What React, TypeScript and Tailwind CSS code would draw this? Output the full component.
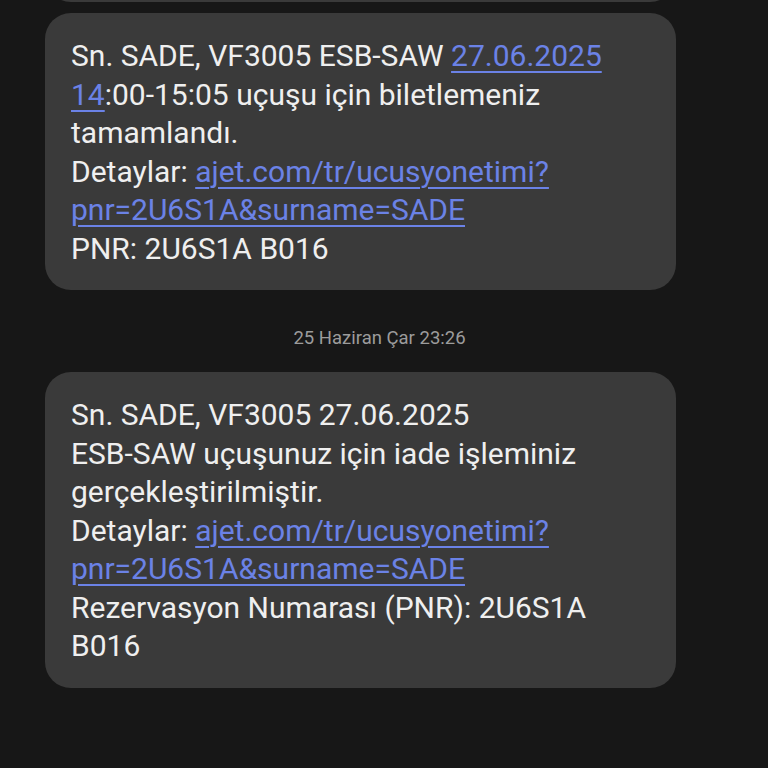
const linkCls = "text-[#6b82e6] underline decoration-[1.5px] underline-offset-[5px]";

function Bubble({ children }: { children: React.ReactNode }) {
    return (
        <div className="ml-[45px] w-[631px] rounded-[26px] bg-[#3a3a3a] pl-[26px] pr-[20px] pt-[24px] pb-[22px] text-[30px] leading-[38.5px] text-[#efefef]">
            {children}
        </div>
    );
}

export default function App() {
    return (
        <div
            className="h-[768px] w-[768px] overflow-hidden bg-[#171717]"
            style={{ fontFamily: "Roboto, 'Noto Sans', sans-serif" }}
        >
            <div className="-mt-[40px] ml-[45px] h-[42px] w-[631px] rounded-b-[26px] bg-[#3a3a3a]" />
            <div className="mt-[11px]">
                <Bubble>
                    <div>
                        Sn. SADE, VF3005 ESB-SAW <span className={linkCls}>27.06.2025</span>
                    </div>
                    <div>
                        <span className={linkCls}>14</span>:00-15:05 uçuşu için biletlemeniz
                    </div>
                    <div>tamamlandı.</div>
                    <div>
                        Detaylar: <span className={linkCls}>ajet.com/tr/ucusyonetimi?</span>
                    </div>
                    <div>
                        <span className={linkCls}>pnr=2U6S1A&amp;surname=SADE</span>
                    </div>
                    <div>PNR: 2U6S1A B016</div>
                </Bubble>
            </div>
            <div className="flex h-[82px] items-center justify-center pt-[15px] pr-[9px] text-[18.5px] text-[#9c9c9c]">
                25 Haziran Çar 23:26
            </div>
            <Bubble>
                <div>Sn. SADE, VF3005 27.06.2025</div>
                <div>ESB-SAW uçuşunuz için iade işleminiz</div>
                <div>gerçekleştirilmiştir.</div>
                <div>
                    Detaylar: <span className={linkCls}>ajet.com/tr/ucusyonetimi?</span>
                </div>
                <div>
                    <span className={linkCls}>pnr=2U6S1A&amp;surname=SADE</span>
                </div>
                <div>Rezervasyon Numarası (PNR): 2U6S1A</div>
                <div>B016</div>
            </Bubble>
        </div>
    );
}
